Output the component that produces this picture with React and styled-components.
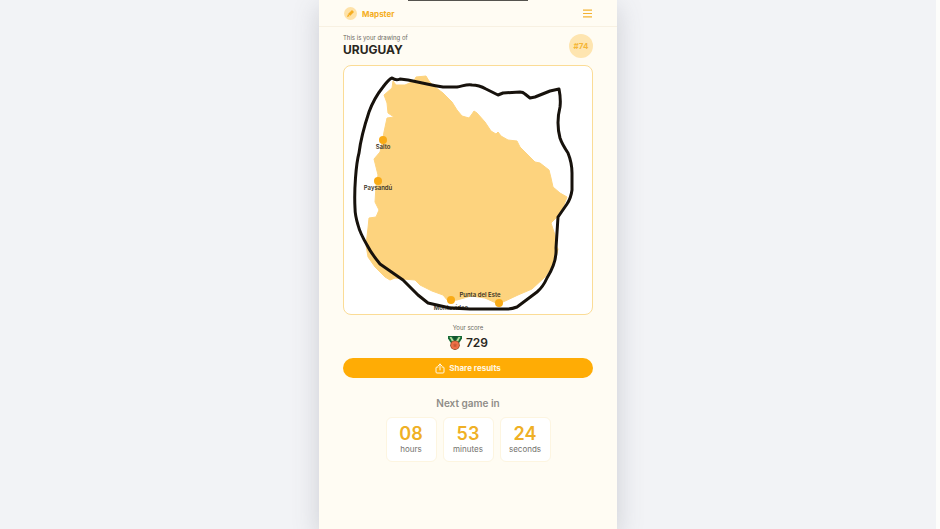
// src/App.jsx
/*
 * Result screen of the daily drawing game:
 * the drawing over the country, the score and the countdown
 */
import React from 'react';
import styled, { createGlobalStyle } from 'styled-components';

const GlobalStyle = createGlobalStyle`
  * {
    box-sizing: border-box;
  }

  body {
    margin: 0;
    background-color: #f2f3f6;
    color: #282620;
    font-family: Inter, "Liberation Sans", sans-serif;
  }
`;

const Shell = styled.div`
  display: flex;
  justify-content: center;
  min-height: 100vh;
  border-right: 4px solid #fdfdfb;
  overflow: hidden;
`;

// Main column, as wide as a phone
const Phone = styled.div`
  display: flex;
  flex-direction: column;
  width: 100%;
  max-width: 298px;
  background-color: #fffcf3;
  box-shadow: 0 8px 24px rgba(90, 95, 110, 0.25);
`;

const Notch = styled.div`
  width: 40%;
  height: 1px;
  margin: 0 auto;
  background-color: #55534e;
`;

const Header = styled.header`
  display: flex;
  align-items: center;
  justify-content: space-between;
  height: 26px;
  padding: 0 24px;
  border-bottom: 1px solid #f8f1e2;
`;

const Brand = styled.a`
  display: flex;
  align-items: center;
  gap: 4px;
  color: #f5ae22;
  font-size: 8px;
  font-weight: 700;
  text-decoration: none;
`;

const MenuButton = styled.button`
  display: flex;
  padding: 0;
  border: none;
  background: none;
  color: #f3b232;
  cursor: pointer;
`;

const Main = styled.main`
  display: flex;
  flex-direction: column;
  align-items: center;
  padding: 6px 24px 24px;
`;

const TitleRow = styled.div`
  display: flex;
  align-items: center;
  justify-content: space-between;
  width: 100%;
  margin-bottom: 7px;
`;

const SmallText = styled.p`
  margin: 0;
  color: #6b6962;
  font-size: 6px;
  line-height: 9px;
`;

const CountryName = styled.h1`
  margin: 0;
  font-size: 12px;
  font-weight: 700;
  line-height: 16px;
`;

const RoundBadge = styled.span`
  display: flex;
  align-items: center;
  justify-content: center;
  width: 24px;
  height: 24px;
  border-radius: 50%;
  background-color: #fee5b0;
  color: #f5b637;
  font-size: 8px;
  font-weight: 700;
`;

const MapCard = styled.div`
  width: 100%;
  border: 1px solid #fbdc96;
  border-radius: 8px;
  background-color: #ffffff;
  overflow: hidden;

  svg {
    display: block;
    width: 100%;
  }
`;

const CityLabel = styled.text`
  fill: #3a3427;
  font-size: 6px;
  font-weight: 600;
  text-anchor: middle;
`;

const ScoreLabel = styled(SmallText)`
  margin-top: 8px;
`;

const Score = styled.div`
  display: flex;
  align-items: center;
  gap: 4px;
  margin: 3px 0 7px;
  font-size: 12px;
  font-weight: 600;
  line-height: 16px;
`;

const ShareButton = styled.button`
  display: flex;
  align-items: center;
  justify-content: center;
  gap: 4px;
  width: 100%;
  height: 20px;
  padding: 0;
  border: none;
  border-radius: 10px;
  background-color: #ffac05;
  color: #fff8e6;
  font-family: inherit;
  font-size: 8px;
  font-weight: 700;
  cursor: pointer;
`;

const NextHeader = styled.h2`
  margin: 18px 0 7px;
  color: #8f8d88;
  font-size: 10px;
  font-weight: 600;
  line-height: 14px;
`;

const Countdown = styled.div`
  display: flex;
  gap: 6px;
`;

const TimeBox = styled.div`
  display: flex;
  flex-direction: column;
  align-items: center;
  width: 51px;
  padding: 6px 0;
  border: 1px solid #fdf5e0;
  border-radius: 6px;
  background-color: #ffffff;
`;

const TimeValue = styled.span`
  color: #efb025;
  font-size: 18px;
  font-weight: 600;
  line-height: 20px;
`;

const TimeUnit = styled.span`
  color: #74726d;
  font-size: 8px;
  line-height: 11px;
`;

const COUNTRY =
  'M50 16L53 20L62 20L71 16L73 12L83 11L86 16L92 22L100 28L109 37L114 45L119 51L126 53L129 49L131 46L134 48L142 57L148 66L153 69L155 67L158 71L165 75L174 76L177 82L184 89L192 97L197 98L206 105L208 113L210 122L217 128L224 132L221 140L214 152L208 158L212 170L213 180L215 184L212 197L202 212L189 224L175 230L160 237L153 238L142 233L128 231L114 235L105 236L100 230L89 226L77 220L72 215L60 214L52 213L47 215L42 212L32 202L25 192L23 180L25 163L26 153L33 152L36 145L32 137L33 121L35 110L31 94L37 87L39 78L41 67L44 53L51 52L45 48L44 38L41 30L49 23Z';

const DRAWING =
  'M49 13Q53 16 57 14L65 15L84 19Q93 21 100 22L114 22C120 21 124 19 129 20Q136 20 143 24L155 30L160 28L177 27Q180 27 182 29L187 33L192 32L207 26L216 24Q218 34 217 42Q213 58 217 73Q219 79 225 88Q229 98 229 108L229 125Q228 133 224 139L215 152L213 183Q214 197 204 213Q200 222 194 227L174 242Q169 244 164 244L127 244L107 243L85 238L75 230L60 215Q47 206 37 199Q28 188 24 180Q17 168 15 160Q12 150 12 143C11 125 13 99 16 88C18 72 22 59 26 47C30 36 36 27 40 22Q46 14 49 13Z';

const cities = [
  { name: 'Salto', x: 40, y: 75, labelX: 40, labelY: 84 },
  { name: 'Paysandú', x: 35, y: 116, labelX: 35, labelY: 125 },
  { name: 'Montevideo', x: 108, y: 235, labelX: 108, labelY: 245 },
  { name: 'Punta del Este', x: 156, y: 238, labelX: 137, labelY: 232 },
];

const countdown = [
  { value: '08', unit: 'hours' },
  { value: '53', unit: 'minutes' },
  { value: '24', unit: 'seconds' },
];

const LogoIcon = () => (
  <svg width="15" height="15" viewBox="0 0 15 15" aria-hidden="true">
    <circle cx="7.5" cy="7.5" r="6.5" fill="#fee2a8" />
    <path d="M4 11l1-3 4-4 2 2-4 4z" fill="#f5ae22" />
    <path d="M5.5 8.5l1.5 1.5" stroke="#fee2a8" strokeWidth="0.7" />
  </svg>
);

const MenuIcon = () => (
  <svg width="10" height="9" viewBox="0 0 10 9" aria-hidden="true">
    <path d="M0 1.2h9M0 4.5h9M0 7.8h9" stroke="currentColor" strokeWidth="1.2" />
  </svg>
);

const MedalIcon = () => (
  <svg width="14" height="14" viewBox="0 0 14 14" aria-hidden="true">
    <path d="M0 0h14v2.500L10.500 8h-7L0 2.500z" fill="#176b36" />
    <path d="M1.500 1h2L7 6.500l3.500-5.500h2L9 7.500H5z" fill="#b5d99a" />
    <path d="M4.500 0h5L7 4.500z" fill="#14532d" />
    <circle cx="7" cy="9.200" r="4.800" fill="#8f4a26" />
    <circle cx="7" cy="9.200" r="3.900" fill="#ee7048" />
    <path d="M7 6.900l.7 1.600 1.700.1-1.300 1.100.4 1.600L7 10.400l-1.500.9.400-1.600-1.300-1.100 1.700-.1z" fill="#c85a35" />
  </svg>
);

const ShareIcon = () => (
  <svg width="10" height="11" viewBox="0 0 10 11" fill="none" stroke="currentColor" aria-hidden="true">
    <path
      d="M3 4H2Q1 4 1 5v4q0 1 1 1h6q1 0 1-1V5Q9 4 8 4H7M5 7V1M3 3l2-2 2 2"
      strokeLinecap="round"
      strokeLinejoin="round"
    />
  </svg>
);

const DrawingMap = () => (
  <MapCard>
    <svg viewBox="1 1 248 248" role="img" aria-label="Your drawing of Uruguay">
      <path d={COUNTRY} fill="#fdd37e" stroke="#fdd37e" strokeLinejoin="round" />
      {cities.map((city) => (
        <g key={city.name}>
          <circle cx={city.x} cy={city.y} r="4" fill="#f9ab17" />
          <CityLabel x={city.labelX} y={city.labelY}>{city.name}</CityLabel>
        </g>
      ))}
      <path d={DRAWING} fill="none" stroke="#17120c" strokeWidth="3" strokeLinejoin="round" />
    </svg>
  </MapCard>
);

const App = () => {
  return (
    <Shell>
      <GlobalStyle />
      <Phone>
        <Notch />
        <Header>
          <Brand href="#">
            <LogoIcon />
            Mapster
          </Brand>
          <MenuButton type="button" aria-label="Menu">
            <MenuIcon />
          </MenuButton>
        </Header>
        <Main>
          <TitleRow>
            <div>
              <SmallText>This is your drawing of</SmallText>
              <CountryName>URUGUAY</CountryName>
            </div>
            <RoundBadge>#74</RoundBadge>
          </TitleRow>
          <DrawingMap />
          <ScoreLabel>Your score</ScoreLabel>
          <Score>
            <MedalIcon />
            729
          </Score>
          <ShareButton type="button">
            <ShareIcon />
            Share results
          </ShareButton>
          <NextHeader>Next game in</NextHeader>
          <Countdown>
            {countdown.map((item) => (
              <TimeBox key={item.unit}>
                <TimeValue>{item.value}</TimeValue>
                <TimeUnit>{item.unit}</TimeUnit>
              </TimeBox>
            ))}
          </Countdown>
        </Main>
      </Phone>
    </Shell>
  );
};

export default App;
